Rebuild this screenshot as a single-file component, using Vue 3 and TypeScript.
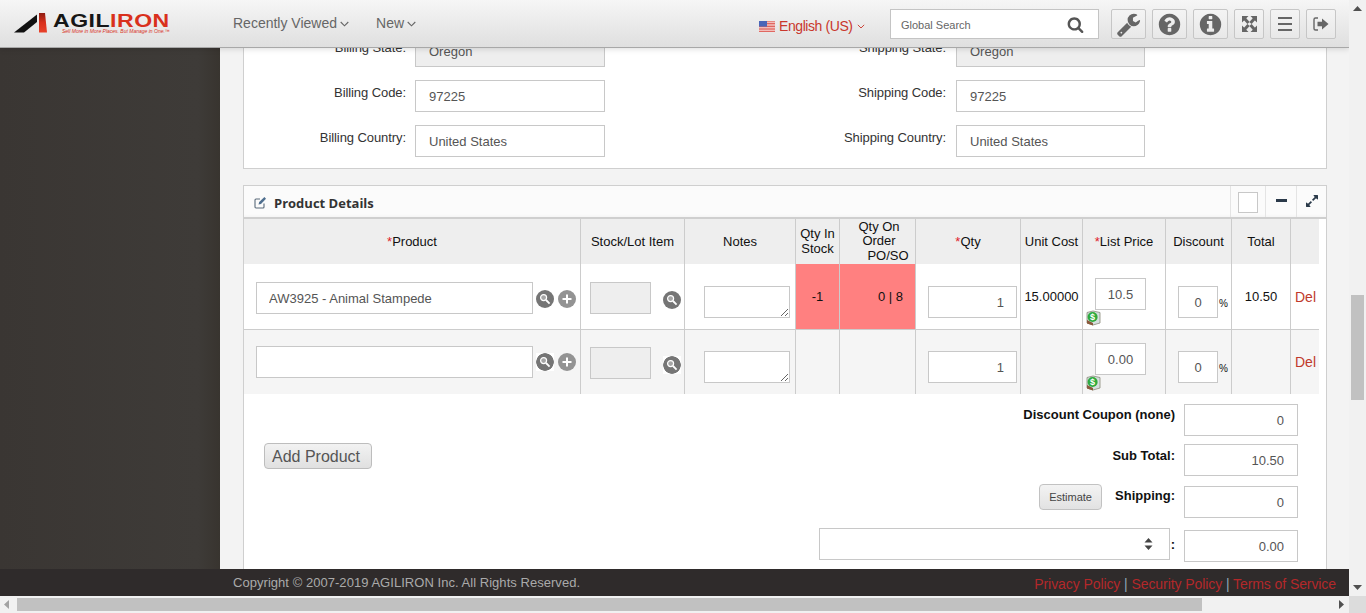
<script setup lang="ts">
interface FormRow { left: string; leftValue: string; right: string; rightValue: string; disabled: boolean }
const formRows: FormRow[] = [
  { left: 'Billing State:', leftValue: 'Oregon', right: 'Shipping State:', rightValue: 'Oregon', disabled: true },
  { left: 'Billing Code:', leftValue: '97225', right: 'Shipping Code:', rightValue: '97225', disabled: false },
  { left: 'Billing Country:', leftValue: 'United States', right: 'Shipping Country:', rightValue: 'United States', disabled: false },
]
interface Line { key: string; product: string; inStock: string; onOrder: string; cost: string; price: string; total: string; alert: boolean }
const lines: Line[] = [
  { key: 'r1', product: 'AW3925 - Animal Stampede', inStock: '-1', onOrder: '0 | 8', cost: '15.00000', price: '10.5', total: '10.50', alert: true },
  { key: 'r2', product: '', inStock: '', onOrder: '', cost: '', price: '0.00', total: '', alert: false },
]
const searchPath = 'M1216 832q0-185-131.5-316.5t-316.5-131.5-316.5 131.5-131.5 316.5 131.5 316.5 316.5 131.5 316.5-131.5 131.5-316.5zm512 832q0 52-38 90t-90 38q-54 0-90-38l-343-342q-179 124-399 124-143 0-273.5-55.5t-225-150-150-225-55.5-273.5 55.5-273.5 150-225 225-150 273.5-55.5 273.5 55.5 225 150 150 225 55.5 273.5q0 220-124 399l343 343q37 37 37 90z'
</script>

<template>
  <div class="app">
    <div class="viewport">
      <header class="topbar">
        <div class="logo">
          <svg class="mark" width="34" height="20" viewBox="0 0 34 20">
            <defs>
              <linearGradient id="redg" x1="0" y1="0" x2="0" y2="1"><stop offset="0" stop-color="#8f1d12" /><stop offset=".5" stop-color="#d9301c" /><stop offset="1" stop-color="#e8412a" /></linearGradient>
            </defs>
            <path d="M0 19.5 L23 1.5 V9 L10 19.5 Z" fill="#111" />
            <path d="M25 0 H31 L33 19.5 H25 Z" fill="url(#redg)" />
          </svg>
          <div class="wordmark">
            <div class="word"><span class="blk">AGIL</span><span class="red">IRON</span></div>
            <div class="tag">Sell More in More Places. But Manage in One.™</div>
          </div>
        </div>
        <nav class="nav">
          <span class="nav-item">Recently Viewed
            <svg width="9" height="6" viewBox="0 0 9 6"><path d="M.7 1 4.5 4.8 8.3 1" fill="none" stroke="#666" stroke-width="1.1" /></svg>
          </span>
          <span class="nav-item">New
            <svg width="9" height="6" viewBox="0 0 9 6"><path d="M.7 1 4.5 4.8 8.3 1" fill="none" stroke="#666" stroke-width="1.1" /></svg>
          </span>
        </nav>
        <div class="lang">
          <svg width="16" height="11" viewBox="0 0 16 11">
            <rect width="16" height="11" fill="#fff" />
            <path d="M0 .8h16M0 2.4h16M0 4h16M0 5.6h16M0 7.2h16M0 8.8h16M0 10.4h16" stroke="#d8433a" stroke-width=".9" />
            <rect width="8" height="5.6" fill="#4a66b8" />
          </svg>
          <span>English (US)</span>
          <svg width="8" height="5" viewBox="0 0 9 6"><path d="M.7 1 4.5 4.8 8.3 1" fill="none" stroke="#c9372c" stroke-width="1.1" /></svg>
        </div>
        <div class="gsearch">
          <span>Global Search</span>
          <svg width="17" height="17" viewBox="0 0 1792 1792"><path :d="searchPath" fill="#555" /></svg>
        </div>
        <div class="tools">
          <button class="tool w35"><svg width="25" height="25" viewBox="0 0 1792 1792"><path fill="#666" d="M448 1472q0-26-19-45t-45-19-45 19-19 45 19 45 45 19 45-19 19-45zm644-420l-682 682q-37 37-90 37-52 0-91-37l-106-108q-38-36-38-90 0-53 38-91l681-681q39 98 114.5 173.5t173.5 114.5zm634-435q0 39-23 106-47 134-164.5 217.5t-258.5 83.5q-185 0-316.5-131.5t-131.5-316.5 131.5-316.5 316.5-131.5q58 0 121.5 16.5t107.5 46.5q16 11 16 28t-16 28l-293 169v224l193 107q5-3 79-48.5t135.5-81 70.5-35.5q15 0 23.5 10t8.5 25z" /></svg></button>
          <button class="tool w35"><svg width="25" height="25" viewBox="0 0 1792 1792"><path fill="#666" d="M1024 1376v-192q0-14-9-23t-23-9h-192q-14 0-23 9t-9 23v192q0 14 9 23t23 9h192q14 0 23-9t9-23zm256-672q0-88-55.5-163t-138.5-116-170-41q-243 0-371 213-15 24 8 42l132 100q7 6 19 6 16 0 25-12 53-68 86-92 34-24 86-24 48 0 85.5 26t37.5 59q0 38-20 61t-68 45q-63 28-115.5 86.5t-52.5 125.5v36q0 14 9 23t23 9h192q14 0 23-9t9-23q0-19 21.5-49.5t54.5-49.5q32-18 49-28.5t46-35 44.5-48 28-60.5 12.5-81zm384 192q0 209-103 385.5t-279.5 279.5-385.5 103-385.5-103-279.5-279.5-103-385.5 103-385.5 279.5-279.5 385.5-103 385.5 103 279.5 279.5 103 385.5z" /></svg></button>
          <button class="tool w35"><svg width="25" height="25" viewBox="0 0 1792 1792"><path fill="#666" d="M1152 1376v-160q0-14-9-23t-23-9h-96v-512q0-14-9-23t-23-9h-320q-14 0-23 9t-9 23v160q0 14 9 23t23 9h96v320h-96q-14 0-23 9t-9 23v160q0 14 9 23t23 9h448q14 0 23-9t9-23zm-128-896v-160q0-14-9-23t-23-9h-192q-14 0-23 9t-9 23v160q0 14 9 23t23 9h192q14 0 23-9t9-23zm640 416q0 209-103 385.5t-279.5 279.5-385.5 103-385.5-103-279.5-279.5-103-385.5 103-385.5 279.5-279.5 385.5-103 385.5 103 279.5 279.5 103 385.5z" /></svg></button>
          <button class="tool w30"><svg width="15" height="16" viewBox="0 0 15 16"><path fill="#666" d="M0 0h6.5L0 6.5zM15 0v6.5L8.5 0zM0 16V9.5L6.5 16zM15 16H8.5L15 9.5z" /><path d="M2.5 2.5 6.5 7M12.5 2.5 8.5 7M2.5 13.5 6.5 9M12.5 13.5 8.5 9" stroke="#666" stroke-width="3" /></svg></button>
          <button class="tool w30"><svg width="16" height="16" viewBox="0 0 16 16"><path d="M1 2h14M1 8h14M1 14h14" stroke="#666" stroke-width="2" /></svg></button>
          <button class="tool w30"><svg width="16" height="14" viewBox="0 0 16 14"><path d="M5 1H2.5A1.5 1.5 0 0 0 1 2.500v9A1.500 1.500 0 0 0 2.500 13H5" fill="none" stroke="#666" stroke-width="1.4" /><path fill="#666" d="M4.500 4.800H9V1.500L15.500 7 9 12.500V9.200H4.500z" /></svg></button>
        </div>
      </header>

      <div class="main">
        <aside class="sidebar"></aside>
        <section class="content">
          <div class="panel address">
            <div v-for="row in formRows" :key="row.left" class="form-row">
              <div class="field first">
                <label>{{ row.left }}</label>
                <input :class="{ off: row.disabled }" :value="row.leftValue" readonly />
              </div>
              <div class="field second">
                <label>{{ row.right }}</label>
                <input :class="{ off: row.disabled }" :value="row.rightValue" readonly />
              </div>
            </div>
          </div>

          <div class="panel products">
            <div class="panel-head">
              <svg class="edit" width="13" height="13" viewBox="0 0 13 13">
                <path d="M10 7.500V11a1 1 0 0 1-1 1H2a1 1 0 0 1-1-1V4a1 1 0 0 1 1-1h4" fill="none" stroke="#5a6a7a" stroke-width="1.1" />
                <path d="M4.500 8.600 5.200 6 10.400 1 12 2.700 7 7.900z" fill="#4f6f8f" />
              </svg>
              <span class="title">Product Details</span>
              <div class="head-cell check"><i></i></div>
              <div class="head-cell minus"><b></b></div>
              <div class="head-cell grow">
                <svg width="14" height="14" viewBox="0 0 1792 1792"><path fill="#2b3a4a" d="M883 1056q0 13-10 23l-332 332 144 144q19 19 19 45t-19 45-45 19h-448q-26 0-45-19t-19-45v-448q0-26 19-45t45-19 45 19l144 144 332-332q10-10 23-10t23 10l114 114q10 10 10 23zm781-864v448q0 26-19 45t-45 19-45-19l-144-144-332 332q-10 10-23 10t-23-10l-114-114q-10-10-10-23t10-23l332-332-144-144q-19-19-19-45t19-45 45-19h448q26 0 45 19t19 45z" /></svg>
              </div>
            </div>

            <table class="grid">
              <colgroup>
                <col style="width:337px" /><col style="width:104px" /><col style="width:111px" /><col style="width:44px" /><col style="width:76px" /><col style="width:105px" /><col style="width:62px" /><col style="width:83px" /><col style="width:66px" /><col style="width:59px" /><col style="width:28px" />
              </colgroup>
              <thead>
                <tr>
                  <th class="one"><em>*</em>Product</th>
                  <th class="one">Stock/Lot Item</th>
                  <th class="one">Notes</th>
                  <th>Qty In Stock</th>
                  <th class="po">Qty On<br />Order<br /><span>PO/SO</span></th>
                  <th class="one"><em>*</em>Qty</th>
                  <th class="one">Unit Cost</th>
                  <th class="one"><em>*</em>List Price</th>
                  <th class="one">Discount</th>
                  <th class="one">Total</th>
                  <th class="last"></th>
                </tr>
              </thead>
              <tbody>
                <tr v-for="line in lines" :key="line.key" :class="line.key">
                  <td class="c-product">
                    <div class="inline">
                      <input class="prod" :value="line.product" readonly />
                      <span class="round first-round"><svg width="12" height="12" viewBox="0 0 12 12"><circle cx="4.600" cy="4.600" r="3" fill="rgba(255,255,255,.35)" stroke="#fff" stroke-width="1.200" /><path d="M7 7l3.600 3.600" stroke="#fff" stroke-width="1.800" /></svg></span>
                      <span class="round plus"><svg width="10" height="10" viewBox="0 0 10 10"><path d="M5 .5v9M.5 5h9" stroke="#fff" stroke-width="2" /></svg></span>
                    </div>
                  </td>
                  <td class="c-stock">
                    <div class="inline">
                      <input class="stock off" readonly />
                      <span class="round lookup"><svg width="12" height="12" viewBox="0 0 12 12"><circle cx="4.600" cy="4.600" r="3" fill="rgba(255,255,255,.35)" stroke="#fff" stroke-width="1.200" /><path d="M7 7l3.600 3.600" stroke="#fff" stroke-width="1.800" /></svg></span>
                    </div>
                  </td>
                  <td class="c-notes"><textarea class="notes" readonly></textarea></td>
                  <td class="c-text center" :class="{ alert: line.alert }">{{ line.inStock }}</td>
                  <td class="c-text right" :class="{ alert: line.alert }">{{ line.onOrder }}</td>
                  <td class="c-qty"><input class="qty" value="1" readonly /></td>
                  <td class="c-text center">{{ line.cost }}</td>
                  <td class="c-price">
                    <input class="price" :value="line.price" readonly />
                    <svg class="book" width="15" height="16" viewBox="0 0 15 16">
                      <path d="M1 2.500 7 1l7 1.500V13l-7 2-6-2z" fill="#d5dfdf" stroke="#8a8a7a" stroke-width=".8" />
                      <path d="M1 10v3.400L7 15.600V13z" fill="#8a5a3c" />
                      <circle cx="6.600" cy="7" r="5" fill="#2eaa3c" />
                      <text x="6.600" y="10" text-anchor="middle" class="dollar">$</text>
                    </svg>
                  </td>
                  <td class="c-disc">
                    <div class="inline"><input class="disc" value="0" readonly /><span class="pct">%</span></div>
                  </td>
                  <td class="c-text center">{{ line.total }}</td>
                  <td class="c-del"><span>Del</span></td>
                </tr>
              </tbody>
            </table>

            <div class="summary">
              <div class="add-col"><button class="add">Add Product</button></div>
              <div class="totals">
                <div class="sum-row s1"><label>Discount Coupon (none)</label><input class="amount" value="0" readonly /></div>
                <div class="sum-row s2"><label>Sub Total:</label><input class="amount" value="10.50" readonly /></div>
                <div class="sum-row s3"><button class="estimate">Estimate</button><label class="ship">Shipping:</label><input class="amount" value="0" readonly /></div>
                <div class="sum-row s4">
                  <div class="select">
                    <svg width="9" height="12" viewBox="0 0 9 12"><path d="M4.500 0 8.500 4.500H.5zM4.500 12 .5 7.500h8z" fill="#444" /></svg>
                  </div>
                  <label class="colon">:</label>
                  <input class="amount" value="0.00" readonly />
                </div>
              </div>
            </div>
          </div>
        </section>
      </div>

      <footer class="footer">
        <span class="copy">Copyright © 2007-2019 AGILIRON Inc. All Rights Reserved.</span>
        <span class="links"><a>Privacy Policy</a> | <a>Security Policy</a> | <a>Terms of Service</a></span>
      </footer>
    </div>

    <div class="vbar">
      <svg class="arrow" width="9" height="5" viewBox="0 0 9 5"><path d="M4.500 0 9 5H0z" fill="#505050" /></svg>
      <div class="vthumb"></div>
      <svg class="arrow down" width="9" height="5" viewBox="0 0 9 5"><path d="M4.500 5 9 0H0z" fill="#505050" /></svg>
    </div>
    <div class="hbar">
      <svg class="harrow" width="5" height="9" viewBox="0 0 5 9"><path d="M0 4.500 5 0v9z" fill="#a3a3a3" /></svg>
      <div class="hthumb"></div>
      <svg class="harrow" width="5" height="9" viewBox="0 0 5 9"><path d="M5 4.500 0 0v9z" fill="#505050" /></svg>
    </div>
    <div class="corner"></div>
  </div>
</template>

<style>
html, body { margin: 0; overflow: hidden; }
</style>

<style scoped>
.app {
  width: 1366px;
  height: 613px;
  display: grid;
  grid-template-columns: 1349px 17px;
  grid-template-rows: 596px 17px;
  font-family: "Liberation Sans", Arial, sans-serif;
  font-size: 13px;
  color: #111;
  overflow: hidden;
}
.viewport { display: flex; flex-direction: column; min-height: 0; overflow: hidden; }

.topbar {
  height: 48px;
  flex: none;
  box-sizing: border-box;
  display: flex;
  align-items: center;
  background: linear-gradient(#f6f6f6, #dfdfdf);
  border-bottom: 1px solid #a8a8a8;
  box-shadow: 0 1px 6px rgba(0, 0, 0, .14);
  position: relative;
  z-index: 2;
}
.logo { width: 233px; flex: none; display: flex; align-items: flex-start; padding-left: 14px; box-sizing: border-box; margin-top: 1px; }
.mark { flex: none; margin-top: -1px; }
.wordmark { margin-left: 5px; white-space: nowrap; }
.word {
  font-size: 18px;
  line-height: 14px;
  font-weight: 700;
  transform: scaleX(1.28);
  transform-origin: left;
  letter-spacing: .4px;
}
.blk { color: #161616; }
.red { color: #d9301c; }
.tag { font-size: 5px; line-height: 6px; color: #d9301c; font-style: italic; margin-left: 9px; margin-top: 0; }
.nav { width: 526px; flex: none; display: flex; gap: 27px; font-size: 14px; color: #666; margin-top: -1px; }
.nav-item { display: inline-flex; align-items: center; gap: 3px; }
.nav-item svg { margin-top: 1px; }
.lang { width: 131px; flex: none; display: flex; align-items: center; font-size: 14px; letter-spacing: -.42px; color: #c9372c; margin-top: 5px; }
.lang span { margin: 0 4px; }
.gsearch {
  width: 209px;
  height: 30px;
  flex: none;
  box-sizing: border-box;
  background: #fff;
  border: 1px solid #c4c4c4;
  padding: 2px 14px 0 10px;
  display: flex;
  align-items: center;
  justify-content: space-between;
  font-size: 11px;
  color: #666;
  margin-top: 1px;
}
.gsearch svg { margin-top: -2px; }
.tools { display: flex; margin-left: 12px; gap: 6px; margin-top: 1px; }
.tool {
  height: 30px;
  padding: 0;
  box-sizing: border-box;
  background: linear-gradient(#f4f4f4, #e8e8e8);
  border: 1px solid #c6c6c6;
  border-radius: 2px;
  display: flex;
  align-items: center;
  justify-content: center;
}
.w35 { width: 35px; }
.w30 { width: 30px; }

.main { flex: 1; min-height: 0; display: flex; }
.sidebar { width: 220px; flex: none; background: linear-gradient(90deg, #3a3633 0, #3e3b38 90%, #38342f 100%); }
.content { flex: 1; min-width: 0; overflow: hidden; background: #f3f3f3; padding: 0 22px 0 23px; }
.panel { background: #fff; border: 1px solid #cfcfcf; }
.address { border-top: 0; height: 120px; padding-top: 0; overflow: hidden; }
.form-row { display: flex; height: 45px; align-items: flex-start; }
.form-row:first-child { margin-top: -13px; }
.field { display: flex; align-items: flex-start; }
.field.first { width: 541px; }
.field label { text-align: right; padding-top: 5px; line-height: 15px; color: #333; white-space: nowrap; letter-spacing: -.08px; }
.field.first label { width: 162px; margin-right: 9px; }
.field.second label { width: 161px; margin-right: 10px; }
input {
  height: 32px;
  box-sizing: border-box;
  border: 1px solid #c8c8c8;
  background: #fff;
  font: 13px "Liberation Sans", Arial, sans-serif;
  color: #555;
  padding: 0 12px;
  outline: none;
  display: block;
  border-radius: 0;
}
.field input { width: 190px; padding-left: 13px; }
.field.second input { width: 189px; }
input.off { background: #eee; }

.products { margin-top: 16px; height: 500px; }
.panel-head {
  height: 33px;
  box-sizing: border-box;
  display: flex;
  align-items: center;
  background: linear-gradient(#fbfbfb 28px, #f5f5f5);
  border-bottom: 2px solid #cfcfcf;
  padding-left: 10px;
}
.edit { margin-right: 7px; margin-top: 1px; }
.title { font-family: "Open Sans", sans-serif; font-weight: 700; font-size: 13px; color: #333; flex: 1; margin-top: 2px; }
.head-cell { height: 31px; border-left: 1px solid #e4e4e4; display: flex; align-items: center; justify-content: center; }
.check { width: 34px; }
.check i { width: 18px; height: 19px; border: 1px solid #c8c8c8; background: #fff; display: block; margin-top: 1px; }
.minus { width: 30px; }
.minus b { width: 11px; height: 3px; background: #2b3a4a; display: block; margin-top: -2px; }
.grow { width: 29px; }
.grow svg { margin-top: -2px; }

.grid { border-collapse: separate; border-spacing: 0; table-layout: fixed; width: 1075px; }
th {
  height: 45px;
  padding: 0;
  background: #eee;
  font-weight: 400;
  font-size: 13px;
  line-height: 14.5px;
  color: #111;
  text-align: center;
  border-right: 1px solid #ccc;
  box-sizing: border-box;
}
th.one { padding-top: 1px; }
th.last { border-right: 0; }
th em { color: #e0222a; font-style: normal; }
.po { padding-left: 3px; }
.po span { padding-left: 18px; }
td {
  padding: 0;
  vertical-align: top;
  border-right: 1px solid #ccc;
  box-sizing: border-box;
  font-size: 13px;
  line-height: 15px;
}
.r1 td { height: 66px; background: #fff; border-bottom: 1px solid #ccc; }
.r2 td { height: 64px; background: #f5f5f5; }
td.c-del { border-right: 0; padding: 26px 0 0 4px; font-size: 14px; color: #c0392b; }
.r2 td.c-del { padding-top: 25px; }
.inline { display: flex; align-items: flex-start; }
.c-product { padding-left: 12px; }
.r1 .c-product, .r1 .c-stock { padding-top: 18px; }
.r2 .c-product { padding-top: 16px; }
.r2 .c-stock { padding-top: 17px; }
.prod { width: 277px; }
.round {
  width: 18px;
  height: 18px;
  border-radius: 50%;
  background: #757575;
  display: flex;
  align-items: center;
  justify-content: center;
  flex: none;
  margin-top: 8px;
}
.r2 .first-round, .r2 .lookup {
  border-radius: 0;
  background: radial-gradient(circle closest-side, #757575 94%, #fff 100%);
}
.r2 .first-round, .r2 .plus { margin-top: 7px; }
.first-round { margin-left: 3px; }
.plus { margin-left: 4px; background: #939393; }
.c-stock { padding-left: 9px; }
.stock { width: 61px; }
.lookup { margin-left: 12px; margin-top: 9px; }
.c-notes { padding-left: 19px; }
.r1 .c-notes, .r1 .c-qty, .r1 .c-disc { padding-top: 22px; }
.r2 .c-notes, .r2 .c-qty, .r2 .c-disc { padding-top: 21px; }
.notes {
  width: 86px;
  height: 32px;
  box-sizing: border-box;
  border: 1px solid #c8c8c8;
  background: #fff;
  display: block;
  margin: 0;
  padding: 0;
  outline: none;
}
.c-text { padding-top: 25px; }
.r2 .c-text { padding-top: 24px; }
.center { text-align: center; }
.right { text-align: right; padding-right: 12px; }
.alert { background: #ff8080 !important; }
.c-qty { padding-left: 12px; }
.qty { width: 89px; text-align: right; }
.c-price { padding-left: 12px; position: relative; }
.r1 .c-price { padding-top: 14px; }
.r2 .c-price { padding-top: 13px; }
.price { width: 51px; text-align: center; padding: 0; }
.book { display: block; margin: 0 0 0 -9px; }
.dollar { font: 700 9px "Liberation Sans", sans-serif; fill: #fff; }
.c-disc { padding-left: 12px; }
.disc { width: 40px; text-align: center; padding: 0; }
.pct { font-size: 10px; margin-left: 1px; margin-top: 10px; }

.summary { display: flex; }
.add-col { width: 500px; flex: none; padding: 49px 0 0 20px; box-sizing: border-box; }
.add {
  width: 108px;
  height: 26px;
  padding: 1px 4px 0 0;
  font: 16px "Liberation Sans", Arial, sans-serif;
  color: #555;
  background: linear-gradient(#f2f2f2, #e0e0e0);
  border: 1px solid #bdbdbd;
  border-radius: 4px;
}
.totals { flex: 1; padding: 10px 28px 0 0; display: flex; flex-direction: column; align-items: flex-end; }
.sum-row { display: flex; align-items: flex-start; justify-content: flex-end; }
.s2 { margin-top: 8px; }
.s3 { margin-top: 10px; }
.s4 { margin-top: 12px; }
.sum-row label { font-weight: 700; font-size: 13px; line-height: 15px; color: #111; margin-right: 9px; padding-top: 3px; white-space: nowrap; }
.s2 label { padding-top: 4px; }
.s3 label { padding-top: 2px; }
.amount { width: 114px; text-align: right; padding: 0 13px; }
.estimate {
  width: 63px;
  height: 26px;
  margin: -2px 13px 0 0;
  padding: 0;
  font: 11px "Liberation Sans", Arial, sans-serif;
  color: #444;
  background: linear-gradient(#f3f3f3, #e2e2e2);
  border: 1px solid #c2c2c2;
  border-radius: 4px;
}
.select {
  width: 351px;
  height: 32px;
  box-sizing: border-box;
  border: 1px solid #c8c8c8;
  background: #fff;
  display: flex;
  align-items: center;
  justify-content: flex-end;
  padding-right: 16px;
  margin-top: -2px;
}
.sum-row .colon { margin: 0 9px 0 1px; padding-top: 7px; }

.footer {
  height: 27px;
  flex: none;
  background: #2f2b2b;
  display: flex;
  justify-content: space-between;
  padding: 0 13px 0 233px;
  position: relative;
  z-index: 2;
}
.copy { font-size: 13px; line-height: 27px; color: #aaa; letter-spacing: .04px; }
.links { font-size: 14px; line-height: 30px; color: #8fa6b5; letter-spacing: -.08px; }
.links a { color: #b3282a; }

.vbar {
  background: #f1f1f1;
  grid-row: 1;
  grid-column: 2;
  display: flex;
  flex-direction: column;
  align-items: center;
  position: relative;
}
.arrow { margin-top: 6px; flex: none; }
.arrow.down { position: absolute; bottom: 6px; }
.vthumb { position: absolute; top: 295px; left: 2px; width: 13px; height: 105px; background: #c1c1c1; }
.hbar { background: #f1f1f1; grid-row: 2; grid-column: 1; display: flex; align-items: center; padding: 2px 5px 2px 4px; box-sizing: border-box; position: relative; justify-content: space-between; }
.hthumb { position: absolute; left: 17px; top: 2px; width: 1185px; height: 13px; background: #c1c1c1; }
.corner { background: #dcdcdc; grid-row: 2; grid-column: 2; }
</style>
